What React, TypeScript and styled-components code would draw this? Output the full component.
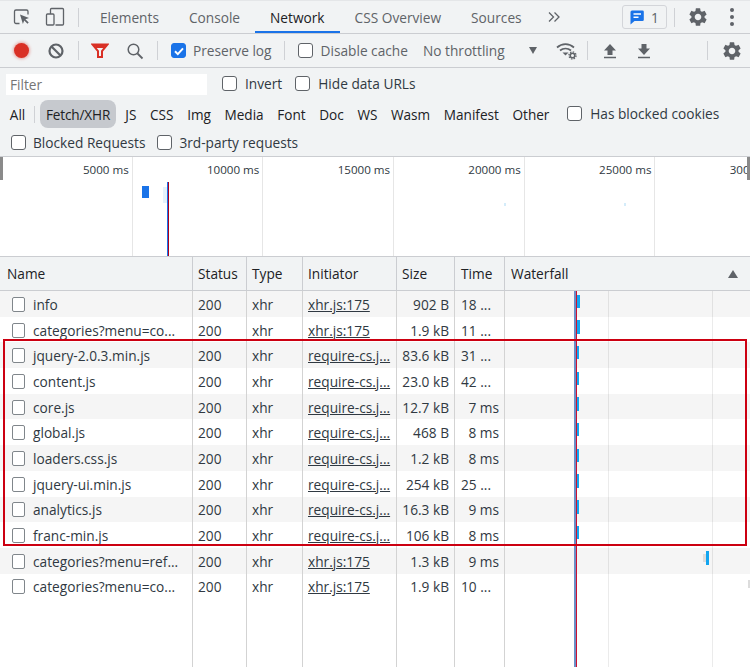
import styled, { createGlobalStyle } from 'styled-components'
import { MdSettings } from 'react-icons/md'

const GlobalStyle = createGlobalStyle`
    html, body {
        margin: 0;
        padding: 0;
        background: #fff;
    }
    body {
        font-family: "Open Sans", "Noto Sans", "Liberation Sans", sans-serif;
        font-size: 13.7px;
        color: #303942;
    }
`

const requests = [
    { name: 'info', initiator: 'xhr.js:175', size: '902 B', time: '18 ...', bar: 72, barWidth: 3 },
    { name: 'categories?menu=co...', initiator: 'xhr.js:175', size: '1.9 kB', time: '11 ...', bar: 72, barWidth: 3 },
    { name: 'jquery-2.0.3.min.js', initiator: 'require-cs.j...', size: '83.6 kB', time: '31 ...', bar: 72, barWidth: 2 },
    { name: 'content.js', initiator: 'require-cs.j...', size: '23.0 kB', time: '42 ...', bar: 72, barWidth: 2 },
    { name: 'core.js', initiator: 'require-cs.j...', size: '12.7 kB', time: '7 ms', bar: 72, barWidth: 2 },
    { name: 'global.js', initiator: 'require-cs.j...', size: '468 B', time: '8 ms', bar: 72, barWidth: 2 },
    { name: 'loaders.css.js', initiator: 'require-cs.j...', size: '1.2 kB', time: '8 ms', bar: 72, barWidth: 2 },
    { name: 'jquery-ui.min.js', initiator: 'require-cs.j...', size: '254 kB', time: '25 ...', bar: 72, barWidth: 2 },
    { name: 'analytics.js', initiator: 'require-cs.j...', size: '16.3 kB', time: '9 ms', bar: 72, barWidth: 2 },
    { name: 'franc-min.js', initiator: 'require-cs.j...', size: '106 kB', time: '8 ms', bar: 72, barWidth: 2 },
    { name: 'categories?menu=ref...', initiator: 'xhr.js:175', size: '1.3 kB', time: '9 ms', bar: 201, barWidth: 3, stub: true },
    { name: 'categories?menu=co...', initiator: 'xhr.js:175', size: '1.9 kB', time: '10 ...', bar: 246, barWidth: 0, stub: true },
]

const typeFilters = ['JS', 'CSS', 'Img', 'Media', 'Font', 'Doc', 'WS', 'Wasm', 'Manifest', 'Other']
const ticks = ['5000 ms', '10000 ms', '15000 ms', '20000 ms', '25000 ms', '30000 ms']

const App = () => {
    return (
        <Page>
            <GlobalStyle />
            <TabBar>
                <IconSlot $w={32}>
                    <svg width="18" height="18" viewBox="0 0 18 18" fill="none">
                        <path d="M6.500 15.500H3A1.500 1.500 0 0 1 1.500 14V3.500A1.500 1.500 0 0 1 3 2h10.500A1.500 1.500 0 0 1 15 3.500V6.500" stroke="#5f6368" strokeWidth="1.300" />
                        <path d="M7 6.500l9 3.500-3.600 1.300 3.300 3.300-1.200 1.200-3.300-3.300-1.300 3.600z" fill="#5f6368" />
                    </svg>
                </IconSlot>
                <IconSlot $w={33}>
                    <svg width="20" height="20" viewBox="0 0 20 20" fill="none" stroke="#5f6368" strokeWidth="1.300">
                        <path d="M5.500 7V2.500A1 1 0 0 1 6.500 1.500h11a1 1 0 0 1 1 1V17a1 1 0 0 1-1 1h-7" />
                        <rect x="1.500" y="7" width="7.500" height="11" rx="1" />
                    </svg>
                </IconSlot>
                <Divider $l={7} $r={6} />
                <Tab>Elements</Tab>
                <Tab>Console</Tab>
                <Tab $active>Network</Tab>
                <Tab>CSS Overview</Tab>
                <Tab>Sources</Tab>
                <MoreTabs>
                    <svg width="12" height="10" viewBox="0 0 12 10" fill="none" stroke="#5f6368" strokeWidth="1.300">
                        <path d="M1 .5L5.500 5 1 9.500M6.500 .5L11 5 6.500 9.500" />
                    </svg>
                </MoreTabs>
                <Spacer />
                <IssueBadge>
                    <svg width="14" height="15" viewBox="0 0 14 15">
                        <path d="M2 .5h10.500A1.300 1.300 0 0 1 13.800 1.800v8a1.300 1.300 0 0 1-1.300 1.300H4.500L.5 14.500V2A1.500 1.500 0 0 1 2 .5z" fill="#1a73e8" />
                        <path d="M3.500 4h7.500M3.500 7.300h5" stroke="#fff" strokeWidth="1.500" />
                    </svg>
                    1
                </IssueBadge>
                <Divider $l={7} $r={12} />
                <Gear />
                <Dots>
                    <i /><i /><i />
                </Dots>
            </TabBar>

            <ActionBar>
                <RecordDot />
                <IconSlot $w={20} $left={17}>
                    <svg width="18" height="18" viewBox="0 0 18 18" fill="none" stroke="#5f6368" strokeWidth="2.200">
                        <circle cx="9" cy="9" r="6.500" />
                        <path d="M4.500 4.500l9 9" />
                    </svg>
                </IconSlot>
                <Divider $l={12} $r={12} />
                <IconSlot $w={18}>
                    <svg width="18" height="16" viewBox="0 0 18 16" fill="none">
                        <path d="M1.500 1.500h15L11 8v6H7V8z" stroke="#d93025" strokeWidth="2" fill="none" />
                        <path d="M3 2h12l-2 3H5z" fill="#d93025" />
                    </svg>
                </IconSlot>
                <IconSlot $w={18} $left={17}>
                    <svg width="18" height="18" viewBox="0 0 18 18" fill="none" stroke="#5f6368" strokeWidth="1.500">
                        <circle cx="7.500" cy="7.500" r="5.300" />
                        <path d="M11.500 11.500l5 5" strokeWidth="1.800" />
                    </svg>
                </IconSlot>
                <Divider $l={13} $r={13} />
                <CheckLabel $gap={7} $muted>
                    <Check $checked>
                        <svg width="12" height="12" viewBox="0 0 12 12" fill="none">
                            <path d="M2 6.300l2.800 2.800L10 3.400" stroke="#fff" strokeWidth="2" />
                        </svg>
                    </Check>
                    Preserve log
                </CheckLabel>
                <Divider $l={12} $r={13} />
                <CheckLabel $gap={8} $muted>
                    <Check />
                    Disable cache
                </CheckLabel>
                <Throttle>No throttling</Throttle>
                <SelectArrow />
                <IconSlot $w={30}>
                    <svg width="21" height="18" viewBox="0 0 21 18" fill="none">
                        <path d="M1 5.500C6 1 13 1 18 5.500M4 8.500c3.300-2.700 7.700-2.700 11 0" stroke="#5f6368" strokeWidth="1.700" />
                        <path d="M6.500 10.500l3 3 3-3z" fill="#5f6368" />
                        <circle cx="16.500" cy="13.500" r="2.300" fill="none" stroke="#5f6368" strokeWidth="1.600" />
                        <circle cx="16.500" cy="13.500" r="3.600" fill="none" stroke="#5f6368" strokeWidth="1.200" strokeDasharray="1.500 1.300" />
                    </svg>
                </IconSlot>
                <Divider $l={5} $r={5} />
                <IconSlot $w={34}>
                    <svg width="14" height="16" viewBox="0 0 14 16">
                        <path d="M7 1l6 6.500H9.500V12h-5V7.500H1zM1 13.800h12v1.500H1z" fill="#5f6368" />
                    </svg>
                </IconSlot>
                <IconSlot $w={34}>
                    <svg width="14" height="16" viewBox="0 0 14 16">
                        <path d="M7 12L1 5.500h3.500V1h5v4.500H13zM1 13.800h12v1.500H1z" fill="#5f6368" />
                    </svg>
                </IconSlot>
                <Spacer />
                <Divider $l={0} $r={0} />
                <Gear $right />
            </ActionBar>

            <FilterPanel>
                <FilterRow>
                    <FilterInput>Filter</FilterInput>
                    <CheckLabel $gap={8} $left={15}><Check />Invert</CheckLabel>
                    <CheckLabel $gap={8} $left={13}><Check />Hide data URLs</CheckLabel>
                </FilterRow>
                <TypeRow>
                    <TypePill>All</TypePill>
                    <TypeDivider />
                    <TypePill $active>Fetch/XHR</TypePill>
                    {typeFilters.map((t) => (
                        <TypePill key={t}>{t}</TypePill>
                    ))}
                    <CheckLabel $gap={8} $left={11} $raised><Check />Has blocked cookies</CheckLabel>
                </TypeRow>
                <BlockedRow>
                    <CheckLabel $gap={7}><Check />Blocked Requests</CheckLabel>
                    <CheckLabel $gap={7}><Check />3rd-party requests</CheckLabel>
                </BlockedRow>
            </FilterPanel>

            <Overview>
                {ticks.map((t) => (
                    <TickCol key={t}>{t}</TickCol>
                ))}
                <Handle $side="left" />
                <Handle $side="right" />
                <OverviewBar />
                <OverviewGhost />
                <OverviewLoad />
                <OverviewFaint $x={504} />
                <OverviewFaint $x={624} />
            </Overview>

            <Table>
                <HeaderRow>
                    <HeadCell $w={193} $pad={7}>Name</HeadCell>
                    <HeadCell $w={54}>Status</HeadCell>
                    <HeadCell $w={56}>Type</HeadCell>
                    <HeadCell $w={94}>Initiator</HeadCell>
                    <HeadCell $w={58}>Size</HeadCell>
                    <HeadCell $w={50} $pad={6}>Time</HeadCell>
                    <WaterfallHead>
                        Waterfall
                        <SortArrow />
                    </WaterfallHead>
                </HeaderRow>
                <Rows>
                    {requests.map((r, i) => (
                        <Row key={i} $odd={i % 2 === 0}>
                            <Cell $w={193} $pad={12}>
                                <FileIcon />
                                {r.name}
                            </Cell>
                            <Cell $w={54}>200</Cell>
                            <Cell $w={56}>xhr</Cell>
                            <LinkCell>{r.initiator}</LinkCell>
                            <Cell $w={58} $right>{r.size}</Cell>
                            <Cell $w={50} $pad={6} $right={r.time.endsWith('ms')}>{r.time}</Cell>
                            <WaterfallCell>
                                {r.stub && <BarStub style={{ left: r.bar - 3 }} />}
                                <Bar style={{ left: r.bar, width: r.barWidth }} />
                            </WaterfallCell>
                        </Row>
                    ))}
                    <EmptyFill>
                        <Cell $w={193} />
                        <Cell $w={54} />
                        <Cell $w={56} />
                        <Cell $w={94} />
                        <Cell $w={58} />
                        <Cell $w={50} />
                    </EmptyFill>
                    <GridLine $x={608} />
                    <GridLine $x={712} />
                    <DomLine />
                    <LoadLine />
                </Rows>
                <Highlight />
            </Table>
        </Page>
    )
}

export default App

const Gear = ({ $right }: { $right?: boolean }) => (
    <GearSlot $right={$right}>
        <MdSettings size={22} color="#5f6368" />
    </GearSlot>
)

const Page = styled.div`
    width: 750px;
    height: 667px;
    overflow: hidden;
    display: flex;
    flex-direction: column;
    background: #fff;
`
const TabBar = styled.div`
    height: 32px;
    flex: none;
    display: flex;
    align-items: stretch;
    background: #f1f3f4;
    border-top: 1px solid #e4e6e8;
    border-bottom: 1px solid #cbcdd1;
    padding-left: 6px;
`
const IconSlot = styled.div<{ $w: number; $left?: number }>`
    width: ${(p) => p.$w}px;
    margin-left: ${(p) => p.$left ?? 0}px;
    flex: none;
    display: flex;
    align-items: center;
    justify-content: center;
`
const Divider = styled.div<{ $l: number; $r: number }>`
    flex: none;
    width: 1px;
    height: 19px;
    align-self: center;
    background: #cfd1d5;
    margin: 0 ${(p) => p.$r}px 0 ${(p) => p.$l}px;
`
const Tab = styled.div<{ $active?: boolean }>`
    flex: none;
    display: flex;
    align-items: center;
    padding: 0 15px;
    color: ${(p) => (p.$active ? '#202124' : '#5f6368')};
    box-shadow: ${(p) => (p.$active ? 'inset 0 -2px 0 #1a73e8' : 'none')};
`
const MoreTabs = styled.div`
    display: flex;
    align-items: center;
    margin-left: 11px;
`
const Spacer = styled.div`
    flex: 1;
`
const IssueBadge = styled.div`
    flex: none;
    align-self: center;
    box-sizing: border-box;
    width: 45px;
    height: 24px;
    display: flex;
    align-items: center;
    justify-content: center;
    gap: 7px;
    border: 1px solid #d3d5d9;
    border-radius: 3px;
    color: #5f6368;
`
const GearSlot = styled.div<{ $right?: boolean }>`
    flex: none;
    display: flex;
    align-items: center;
    justify-content: center;
    width: 22px;
    margin-left: ${(p) => (p.$right ? '13px' : '0')};
    margin-right: ${(p) => (p.$right ? '7px' : '0')};
`
const Dots = styled.div`
    flex: none;
    width: 36px;
    display: flex;
    flex-direction: column;
    align-items: center;
    justify-content: center;
    gap: 3px;
    margin-left: 5px;

    i {
        width: 4px;
        height: 4px;
        border-radius: 50%;
        background: #5f6368;
    }
`
const ActionBar = styled.div`
    height: 33px;
    flex: none;
    display: flex;
    align-items: stretch;
    background: #f1f3f4;
    border-bottom: 1px solid #cbcdd1;
`
const RecordDot = styled.div`
    flex: none;
    width: 15px;
    height: 15px;
    margin: 9px 0 0 14px;
    border-radius: 50%;
    background: #d93025;
    box-shadow: 0 0 3px 1px rgba(217, 48, 37, 0.4);
`
const CheckLabel = styled.label<{ $gap: number; $left?: number; $muted?: boolean; $raised?: boolean }>`
    flex: none;
    display: flex;
    align-items: center;
    gap: ${(p) => p.$gap}px;
    margin-left: ${(p) => p.$left ?? 0}px;
    margin-bottom: ${(p) => (p.$raised ? '2px' : '0')};
    color: ${(p) => (p.$muted ? '#5f6368' : 'inherit')};
`
const Check = styled.span<{ $checked?: boolean }>`
    flex: none;
    box-sizing: border-box;
    width: 15px;
    height: 15px;
    display: flex;
    align-items: center;
    justify-content: center;
    border-radius: 3px;
    border: 1px solid ${(p) => (p.$checked ? '#1a73e8' : '#5f6368')};
    background: ${(p) => (p.$checked ? '#1a73e8' : '#fff')};
`
const Throttle = styled.div`
    flex: none;
    display: flex;
    align-items: center;
    margin-left: 15px;
    color: #5f6368;
`
const SelectArrow = styled.div`
    flex: none;
    align-self: center;
    width: 0;
    height: 0;
    margin: 0 15px 0 24px;
    border-left: 4px solid transparent;
    border-right: 4px solid transparent;
    border-top: 7px solid #5f6368;
`
const FilterPanel = styled.div`
    flex: none;
    height: 89px;
    box-sizing: border-box;
    background: #f1f3f4;
    border-bottom: 1px solid #cbcdd1;
`
const FilterRow = styled.div`
    height: 31px;
    display: flex;
    align-items: center;
    padding-left: 6px;
`
const FilterInput = styled.div`
    width: 201px;
    height: 21px;
    margin-top: 1px;
    padding-left: 4px;
    box-sizing: border-box;
    background: #fff;
    color: #757575;
    display: flex;
    align-items: center;
`
const TypeRow = styled.div`
    height: 30px;
    display: flex;
    align-items: center;
    padding-left: 3px;
`
const TypePill = styled.div<{ $active?: boolean }>`
    flex: none;
    height: 28px;
    display: flex;
    align-items: center;
    justify-content: center;
    box-sizing: border-box;
    font-size: 13.600px;
    padding: 0 6.800px;
    border-radius: 8px;
    color: #202124;
    ${(p) => p.$active && `
        width: 76px;
        padding: 0;
        margin-right: 2.500px;
        letter-spacing: -0.15px;
        background: #c6c9ce;
    `}
`
const TypeDivider = styled.div`
    flex: none;
    width: 1px;
    height: 17px;
    background: #cfd1d5;
    margin: 0 5px 0 2px;
`
const BlockedRow = styled.div`
    height: 27px;
    display: flex;
    align-items: center;
    padding-left: 11px;
    gap: 12px;
`
const Overview = styled.div`
    position: relative;
    flex: none;
    height: 99px;
    display: flex;
    padding-left: 2px;
    background: #fff;
    border-bottom: 1px solid #cbcdd1;
    overflow: hidden;
    font-size: 11.600px;
`
const TickCol = styled.div`
    flex: none;
    width: 130.700px;
    box-sizing: border-box;
    padding: 5px 3px 0 0;
    text-align: right;
    border-right: 1px solid #e6e6e6;
    white-space: nowrap;
`
const Handle = styled.div<{ $side: 'left' | 'right' }>`
    position: absolute;
    top: 0;
    ${(p) => p.$side}: 0;
    width: 3px;
    height: 23px;
    background: #8a8a8a;
`
const OverviewBar = styled.div`
    position: absolute;
    left: 142px;
    top: 29px;
    width: 7px;
    height: 12px;
    background: #1a73e8;
`
const OverviewGhost = styled.div`
    position: absolute;
    left: 163px;
    top: 30px;
    width: 4px;
    height: 16px;
    background: #e4f1fb;
`
const OverviewLoad = styled.div`
    position: absolute;
    left: 167px;
    top: 25px;
    bottom: 0;
    width: 1px;
    background: #1a73e8;
    box-shadow: 1px 0 0 #a8001f;
`
const OverviewFaint = styled.div<{ $x: number }>`
    position: absolute;
    left: ${(p) => p.$x}px;
    top: 46px;
    width: 2px;
    height: 3px;
    background: #d4ecfa;
`
const Table = styled.div`
    position: relative;
    flex: 1;
    min-height: 0;
    display: flex;
    flex-direction: column;
`
const HeaderRow = styled.div`
    flex: none;
    height: 33px;
    display: flex;
    background: #f1f3f4;
    border-bottom: 1px solid #cbcdd1;
`
const HeadCell = styled.div<{ $w: number; $pad?: number }>`
    flex: none;
    width: ${(p) => p.$w}px;
    box-sizing: border-box;
    display: flex;
    align-items: center;
    padding-left: ${(p) => p.$pad ?? 5}px;
    border-right: 1px solid #cbcdd1;
    color: #202124;
`
const WaterfallHead = styled.div`
    flex: 1;
    display: flex;
    align-items: center;
    justify-content: space-between;
    padding: 0 12px 0 6px;
    color: #202124;
`
const SortArrow = styled.div`
    width: 0;
    height: 0;
    border-left: 5px solid transparent;
    border-right: 5px solid transparent;
    border-bottom: 8px solid #5f6368;
`
const Rows = styled.div`
    position: relative;
    flex: 1;
    min-height: 0;
    display: flex;
    flex-direction: column;
`
const Row = styled.div<{ $odd: boolean }>`
    flex: none;
    height: 25.700px;
    display: flex;
    background: ${(p) => (p.$odd ? '#f5f5f5' : '#fff')};
`
const Cell = styled.div<{ $w: number; $pad?: number; $right?: boolean }>`
    flex: none;
    width: ${(p) => p.$w}px;
    box-sizing: border-box;
    display: flex;
    align-items: center;
    justify-content: ${(p) => (p.$right ? 'flex-end' : 'flex-start')};
    padding: 1px ${(p) => (p.$right ? '5px' : '0')} 0 ${(p) => p.$pad ?? 5}px;
    border-right: 1px solid #d3d3d3;
    color: #303942;
    white-space: nowrap;
    overflow: hidden;
`
const LinkCell = styled(Cell).attrs({ $w: 94 })`
    text-decoration: underline;
`
const FileIcon = styled.span`
    flex: none;
    box-sizing: border-box;
    width: 13px;
    height: 15px;
    margin-right: 8px;
    background: #fff;
    border: 1px solid #80868b;
    border-radius: 2px;
`
const WaterfallCell = styled.div`
    position: relative;
    flex: 1;
`
const Bar = styled.span`
    position: absolute;
    top: 3.500px;
    height: 13.500px;
    background: #12a5f0;
`
const BarStub = styled.span`
    position: absolute;
    top: 6px;
    width: 3px;
    height: 8px;
    background: #dcdcdc;
`
const EmptyFill = styled.div`
    flex: 1;
    display: flex;
`
const GridLine = styled.div<{ $x: number }>`
    position: absolute;
    top: 0;
    bottom: 0;
    left: ${(p) => p.$x}px;
    width: 1px;
    background: rgba(0, 0, 0, 0.08);
`
const DomLine = styled.div`
    position: absolute;
    top: 0;
    bottom: 0;
    left: 574px;
    width: 2px;
    background: #6c8ec6;
`
const LoadLine = styled.div`
    position: absolute;
    top: 0;
    bottom: 0;
    left: 576px;
    width: 1px;
    background: #cc1030;
`
const Highlight = styled.div`
    position: absolute;
    left: 3px;
    top: 82px;
    width: 744px;
    height: 207px;
    box-sizing: border-box;
    border: 2px solid #cc0011;
    pointer-events: none;
`
